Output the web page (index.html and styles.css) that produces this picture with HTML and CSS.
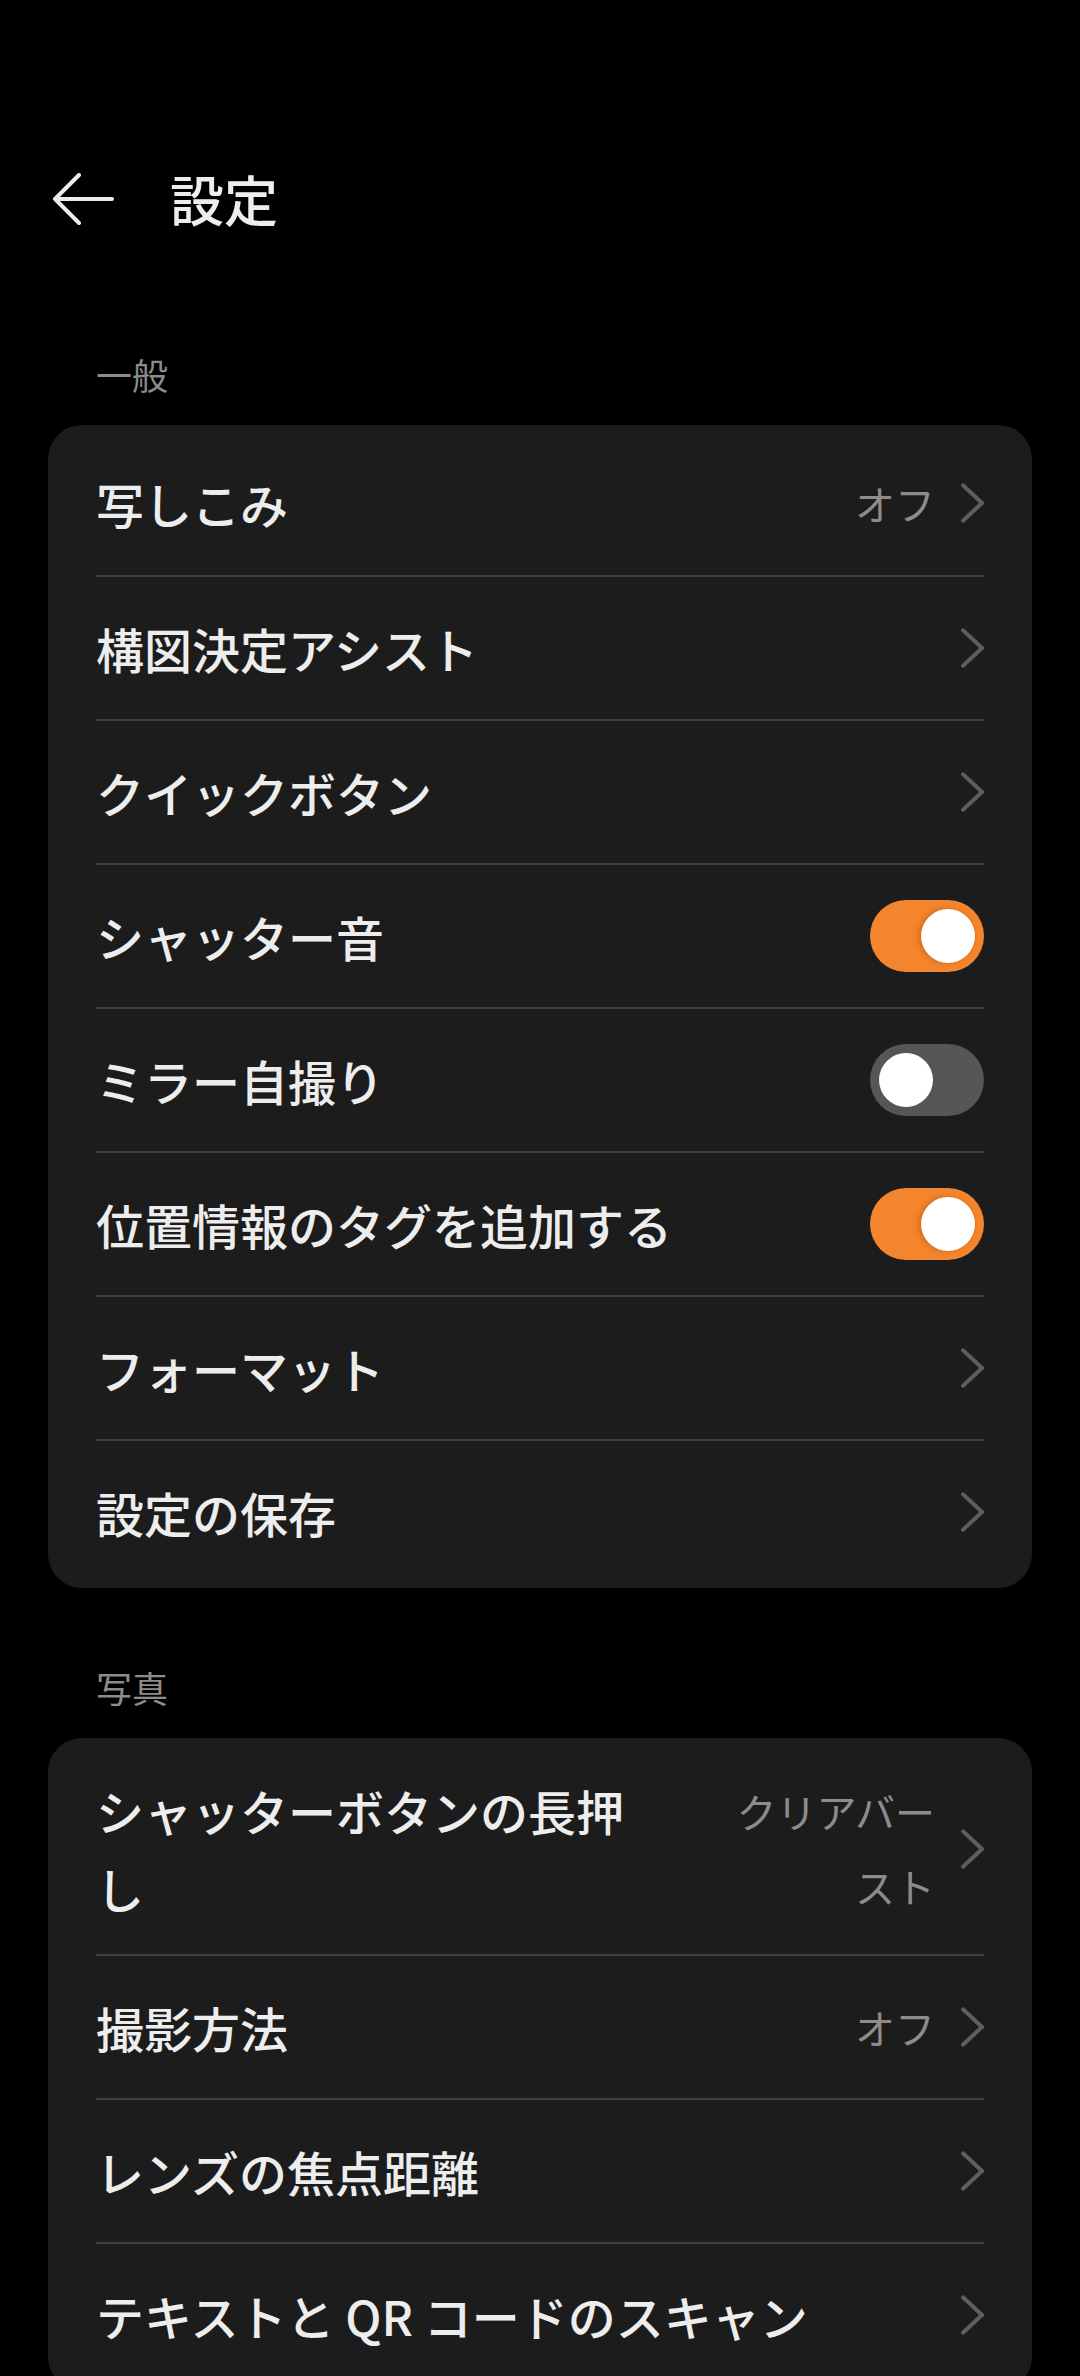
FILE: index.html
```html
<!DOCTYPE html>
<html lang="ja">
<head>
<meta charset="utf-8">
<title>設定</title>
<link rel="stylesheet" href="styles.css">
</head>
<body>
<div class="statusbar"></div>
<header class="appbar">
  <svg class="back" viewBox="0 0 62 52" width="62" height="52" aria-hidden="true">
    <path d="M60 26H3M27 2L3 26l24 24" fill="none" stroke="#ececec" stroke-width="4" stroke-linecap="round" stroke-linejoin="round"/>
  </svg>
  <h1 class="title">設定</h1>
</header>

<section class="group first">
  <h2 class="group-label">一般</h2>
  <div class="card">
    <div class="row"><span class="row-title">写しこみ</span><span class="row-value">オフ</span><span class="chev"></span></div>
    <div class="row"><span class="row-title">構図決定アシスト</span><span class="chev"></span></div>
    <div class="row"><span class="row-title">クイックボタン</span><span class="chev"></span></div>
    <div class="row"><span class="row-title">シャッター音</span><span class="toggle on"></span></div>
    <div class="row"><span class="row-title">ミラー自撮り</span><span class="toggle"></span></div>
    <div class="row"><span class="row-title">位置情報のタグを追加する</span><span class="toggle on"></span></div>
    <div class="row"><span class="row-title">フォーマット</span><span class="chev"></span></div>
    <div class="row"><span class="row-title">設定の保存</span><span class="chev"></span></div>
  </div>
</section>

<section class="group">
  <h2 class="group-label">写真</h2>
  <div class="card">
    <div class="row tall"><span class="row-title">シャッターボタンの長押し</span><span class="row-value">クリアバースト</span><span class="chev"></span></div>
    <div class="row"><span class="row-title">撮影方法</span><span class="row-value">オフ</span><span class="chev"></span></div>
    <div class="row"><span class="row-title">レンズの焦点距離</span><span class="chev"></span></div>
    <div class="row"><span class="row-title">テキストと QR コードのスキャン</span><span class="chev"></span></div>
  </div>
</section>
</body>
</html>
```

FILE: styles.css
```css
* { box-sizing: border-box; }

html, body {
  margin: 0;
  padding: 0;
  background: #000;
}

body {
  width: 1080px;
  height: 2376px;
  overflow: hidden;
  font-family: "Noto Sans CJK JP", "Noto Sans", Roboto, sans-serif;
  color: #ededed;
}

.statusbar {
  height: 139px;
}

.appbar {
  height: 120px;
  display: flex;
  align-items: center;
  padding-left: 52px;
  gap: 56px;
}

.back {
  display: block;
  flex: none;
}

.title {
  margin: 0;
  font-size: 54px;
  font-weight: 500;
  line-height: 70px;
  color: #ededed;
}

.group.first {
  margin-top: 16px;
}

.group-label {
  margin: 0;
  padding: 74px 96px 26px;
  font-size: 36px;
  line-height: 50px;
  font-weight: 400;
  color: #8c8c8c;
}

.card {
  margin: 0 48px;
  background: #1c1c1c;
  border-radius: 34px;
  padding: 6px 0 5px;
}

.row {
  margin: 0 48px;
  min-height: 144px;
  display: flex;
  align-items: center;
  border-top: 2px solid #3f3f3f;
  padding: 27px 0;
}

.row:first-child {
  border-top: 0;
}

.row-title {
  flex: 1;
  min-width: 0;
  font-size: 48px;
  line-height: 78px;
  font-weight: 500;
  color: #ededed;
}

.row-value {
  flex: none;
  max-width: 200px;
  margin-left: 64px;
  font-size: 40px;
  line-height: 75px;
  color: #8c8c8c;
  text-align: right;
}

.chev {
  flex: none;
  width: 22px;
  height: 40px;
  margin-left: 27px;
  position: relative;
}

.chev::before,
.chev::after {
  content: "";
  position: absolute;
  right: 0;
  top: 18px;
  width: 30px;
  height: 4px;
  border-radius: 2px;
  background: #5e5e5e;
  transform-origin: 28px center;
}

.chev::before {
  transform: rotate(43deg);
}

.chev::after {
  transform: rotate(-43deg);
}

.toggle {
  flex: none;
  width: 114px;
  height: 72px;
  border-radius: 36px;
  background: #565656;
  position: relative;
  margin-left: 40px;
}

.toggle::after {
  content: "";
  position: absolute;
  top: 9px;
  left: 9px;
  width: 54px;
  height: 54px;
  border-radius: 50%;
  background: #fff;
}

.toggle.on {
  background: #f5852c;
}

.toggle.on::after {
  left: 51px;
  box-shadow: -2px 0 6px rgba(150, 70, 10, 0.45);
}
```
